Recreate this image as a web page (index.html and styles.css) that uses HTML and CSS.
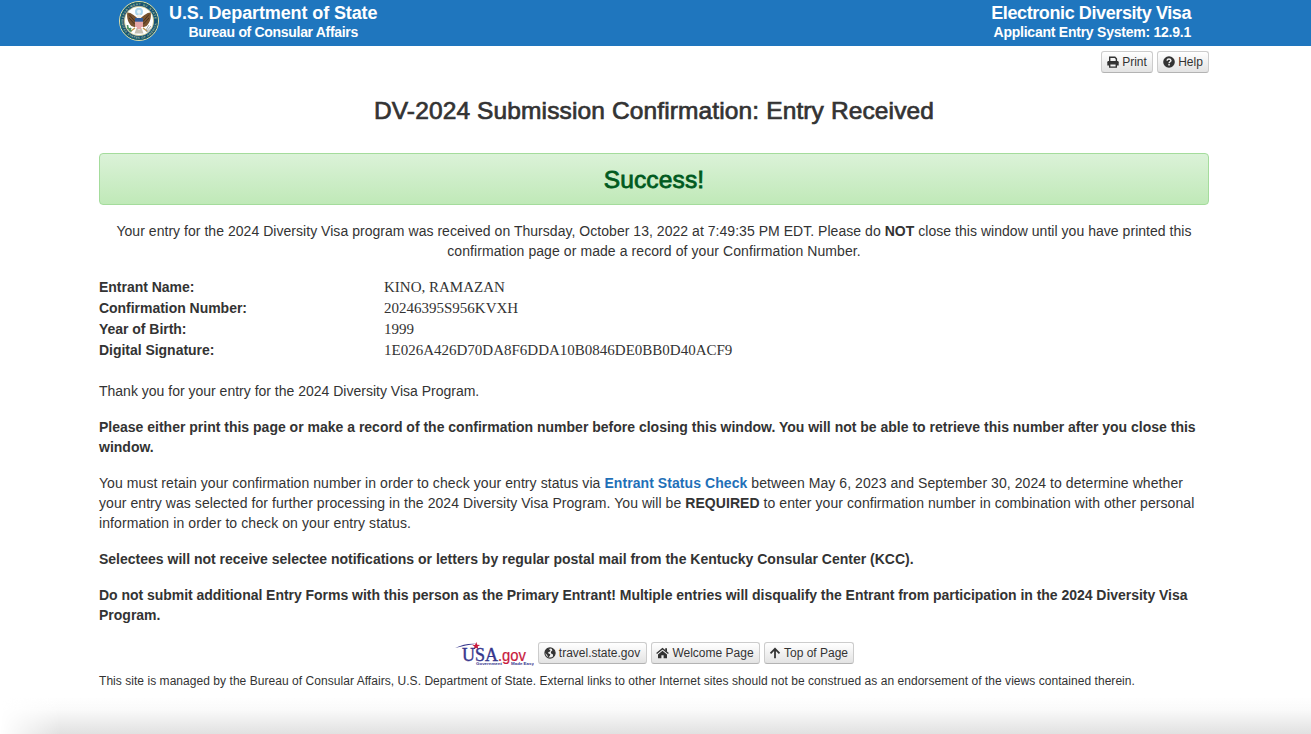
FILE: index.html
```html
<!DOCTYPE html>
<html lang="en">
<head>
<meta charset="utf-8">
<title>DV-2024 Submission Confirmation</title>
<link rel="stylesheet" href="styles.css">
</head>
<body>
<header class="banner">
  <div class="banner-inner">
    <div class="brand">
      <svg class="seal" viewBox="0 0 40 40">
        <defs>
          <path id="arc-top" d="M4.3 20a15.7 15.7 0 0 1 31.4 0"/>
          <path id="arc-bottom" d="M2.2 20a17.8 17.8 0 0 0 35.6 0"/>
        </defs>
        <circle cx="20" cy="20" r="19.5" fill="#174f73" stroke="#e3e1a8" stroke-width="1"/>
        <circle cx="20" cy="20" r="18.4" fill="none" stroke="#1c6b60" stroke-width=".7"/>
        <text class="seal-text"><textPath href="#arc-top" textLength="47">DEPARTMENT OF STATE</textPath></text>
        <text class="seal-text"><textPath href="#arc-bottom" textLength="53">UNITED STATES OF AMERICA</textPath></text>
        <circle cx="20" cy="20" r="14.7" fill="#fff" stroke="#c3bd72" stroke-width=".7"/>
        <circle cx="20" cy="10.8" r="4" fill="#a9d5ed"/>
        <circle cx="20" cy="10.8" r="2" fill="#e9f4f7"/>
        <path d="M18.500 17C15 15 12.500 11.500 8.300 11.600c-.8 5 .8 10.500 4.200 13.400l3.200 1.200 1.500-4zM21.500 17c3.500-2 6-5.500 10.200-5.400.8 5-.8 10.500-4.200 13.400l-3.200 1.200-1.500-4z" fill="#79532f"/>
        <path d="M10 13.500l6 7M10 17l5.500 6M30 13.500l-6 7M30 17l-5.500 6" stroke="#3c2a20" stroke-width=".8"/>
        <path d="M17.600 17.500l.4-3 2-1.200 2 1 .3 3.200z" fill="#f5f1e6"/>
        <path d="M17.500 27h5l2 5.500h-9z" fill="#c6c0b2"/>
        <path d="M16 27l-4 3M24 27l4 3" stroke="#c09549" stroke-width="1.500"/>
        <path d="M8.500 24c0 3 1.500 5 4 6.500M8 27l4 1M10 30l2-3" stroke="#4d9161" stroke-width="1.600" fill="none"/>
        <path d="M27 31l5-6M28 31l4-3M27 29l3-5" stroke="#9ba2a2" stroke-width=".9"/>
        <path d="M16 17h8v6.500c0 2.600-2 4.200-4 5.500-2-1.300-4-2.900-4-5.500z" fill="#f6e9e5"/>
        <path d="M17 20v6M19 20v8M21 20v8M23 20v6" stroke="#d0525a" stroke-width=".9"/>
        <path d="M16 17h8v3.700h-8z" fill="#315a98"/>
      </svg>
      <div class="titles">
        <div class="title dept">U.S. Department of State</div>
        <div class="subtitle bureau">Bureau of Consular Affairs</div>
      </div>
    </div>
    <div class="titles system">
      <div class="title edv">Electronic Diversity Visa</div>
      <div class="subtitle version">Applicant Entry System: 12.9.1</div>
    </div>
  </div>
</header>

<main class="container">
  <div class="toolbar">
    <a class="btn print"><svg class="icon" viewBox="0 0 12 12"><path d="M1.500 4.900h9q1.200 0 1.200 1.300v3.200H.3V6.200Q.3 4.900 1.500 4.900z" fill="#333"/><path d="M2.700 5.500V1.200h5.200l1.500 1.500v2.800" fill="none" stroke="#333" stroke-width="1.400"/><path d="M2.700 7.900h6.600v3.200H2.700z" fill="#f2f2f2" stroke="#333" stroke-width="1.400"/></svg><span>Print</span></a>
    <a class="btn help"><svg class="icon" viewBox="0 0 12 12"><circle cx="6" cy="6" r="5.800" fill="#333"/><path d="M4 4.600Q4.300 3 6 3t1.900 1.500C7.900 5.800 6.100 5.700 6.100 7.200" fill="none" stroke="#f4f4f4" stroke-width="1.500"/><path d="M5.300 8.100h1.500v1.500H5.300z" fill="#f4f4f4"/></svg><span>Help</span></a>
  </div>

  <h1 class="heading"><span>DV-2024 Submission Confirmation: Entry Received</span></h1>
  <div class="alert"><span>Success!</span></div>

  <p class="received"><span class="r1">Your entry for the 2024 Diversity Visa program was received on Thursday, October 13, 2022 at 7:49:35 PM EDT. Please do <b>NOT</b> close this window until you have printed this</span><br><span class="r2">confirmation page or made a record of your Confirmation Number.</span></p>

  <dl class="details">
    <dt>Entrant Name:</dt><dd>KINO, RAMAZAN</dd>
    <dt>Confirmation Number:</dt><dd>20246395S956KVXH</dd>
    <dt>Year of Birth:</dt><dd>1999</dd>
    <dt>Digital Signature:</dt><dd class="signature">1E026A426D70DA8F6DDA10B0846DE0BB0D40ACF9</dd>
  </dl>

  <p><span class="thanks">Thank you for your entry for the 2024 Diversity Visa Program.</span></p>
  <p class="strong"><span class="s1">Please either print this page or make a record of the confirmation number before closing this window. You will not be able to retrieve this number after you close this</span><br>window.</p>
  <p><span class="c1">You must retain your confirmation number in order to check your entry status via <a class="link">Entrant Status Check</a> between May 6, 2023 and September 30, 2024 to determine whether</span><br><span class="c2">your entry was selected for further processing in the 2024 Diversity Visa Program. You will be <b>REQUIRED</b> to enter your confirmation number in combination with other personal</span><br><span class="c3">information in order to check on your entry status.</span></p>
  <p class="strong"><span class="k1">Selectees will not receive selectee notifications or letters by regular postal mail from the Kentucky Consular Center (KCC).</span></p>
  <p class="strong"><span class="d1">Do not submit additional Entry Forms with this person as the Primary Entrant! Multiple entries will disqualify the Entrant from participation in the 2024 Diversity Visa</span><br>Program.</p>

  <footer>
    <div class="footer-links">
      <svg class="usagov" viewBox="0 0 79 24">
        <path d="M0 6Q10 1 21 1.800 11 3 0 6z" fill="#35358c"/>
        <path d="M17 2.700l3 .2L21.300 0l.9 2.700 2.900.2-2.400 1.700.7 2.800-2.300-1.700-2.400 1.800.8-2.900z" fill="#c8193c"/>
        <text x="7" y="18.500" class="usa" textLength="36" lengthAdjust="spacingAndGlyphs">USA</text>
        <text x="43" y="18.500" class="gov" textLength="28" lengthAdjust="spacingAndGlyphs">.gov</text>
        <text x="21" y="22.800" class="tagline" textLength="26" lengthAdjust="spacingAndGlyphs">Government</text>
        <text x="56" y="22.800" class="tagline" textLength="23" lengthAdjust="spacingAndGlyphs">Made Easy</text>
      </svg>
      <a class="btn travel"><svg class="icon" viewBox="0 0 12 12"><circle cx="6" cy="6" r="5.100" fill="#eee" stroke="#333" stroke-width="1.100"/><path d="M1 4l2-2.600L6.200 1 5 2.500l1.500.6-.8 1.700-1.600.5.4 1.200 1.800.7-.5 1.800-1.500 1.600-1.200-2.600L1 5.800zM7.500 1l2.600 1.700L11.300 6l-.7 2.200-1.300 1.700-.5-2.700-1.700-.7-.3-1.700 1.600-1.300z" fill="#333"/></svg><span>travel.state.gov</span></a>
      <a class="btn welcome"><svg class="icon wide" viewBox="0 0 13 12"><path d="M6.500 3.700L2 7.400v3.900h3.400V8.200h2.200v3.100H11V7.400z" fill="#333"/><path d="M.6 6.600L6.500 1.700l5.900 4.900" fill="none" stroke="#333" stroke-width="1.300"/><path d="M9.200 1.200H11v3.500L9.200 3.200z" fill="#333"/></svg><span>Welcome Page</span></a>
      <a class="btn top"><svg class="icon" viewBox="0 0 12 12"><path d="M6 11.300V2M1.500 6.300L6 1.800l4.500 4.500" fill="none" stroke="#333" stroke-width="1.800"/></svg><span>Top of Page</span></a>
    </div>
    <div class="notice"><span>This site is managed by the Bureau of Consular Affairs, U.S. Department of State. External links to other Internet sites should not be construed as an endorsement of the views contained therein.</span></div>
  </footer>
</main>
<div class="bottom-shadow"></div>
</body>
</html>
```
FILE: styles.css
```css
* { box-sizing: border-box; }
html { height: 734px; overflow: hidden; }
body {
  margin: 0;
  height: 734px;
  position: relative;
  overflow: hidden;
  background: #fff;
  color: #333;
  font: 14px/20px "Liberation Sans", Arial, sans-serif;
  white-space: nowrap;
}
.banner { height: 46px; background: #1f76be; color: #fff; }
.banner-inner { width: 1072px; margin-left: 119px; display: flex; justify-content: space-between; }
.brand { display: flex; gap: 10px; }
.seal { width: 40px; height: 40px; margin-top: 1px; }
.seal-text { font: bold 2.800px "Liberation Sans", sans-serif; fill: #b5c9a0; }
.titles { padding-top: 3px; text-align: center; font-weight: bold; }
.system { text-align: right; }
.title { font-size: 18px; line-height: 20px; }
.subtitle { font-size: 14px; line-height: 18px; }
.dept { letter-spacing: -.11px; }
.bureau { letter-spacing: -.31px; }
.edv { letter-spacing: -.4px; }
.version { letter-spacing: -.24px; }
.container { width: 1110px; margin-left: 99px; }
.toolbar { display: flex; justify-content: flex-end; gap: 4px; padding-top: 5px; }
.btn {
  display: inline-flex;
  align-items: center;
  justify-content: center;
  gap: 3px;
  height: 22px;
  border: 1px solid #ccc;
  border-bottom-color: #b3b3b3;
  border-radius: 3px;
  background: linear-gradient(#fff, #e3e3e3);
  font-size: 12px;
  line-height: 18px;
}
.icon { width: 12px; height: 12px; flex: none; }
.wide { width: 13px; }
.print, .help { width: 52px; }
.travel { width: 109px; }
.welcome { width: 109px; }
.top { width: 90px; }
.heading {
  margin: 17px 0 22px;
  font-size: 24.500px;
  line-height: 41px;
  font-weight: normal;
  letter-spacing: .125px;
  text-align: center;
  -webkit-text-stroke: .7px #333;
}
.alert {
  height: 52px;
  margin-bottom: 16px;
  border: 1px solid #a4dc9c;
  border-radius: 4px;
  background: linear-gradient(#dbf2d8, #c0e9b8);
  color: #005a1e;
  font-size: 24.500px;
  line-height: 52px;
  letter-spacing: .15px;
  text-align: center;
  -webkit-text-stroke: .8px #005a1e;
}
p { margin: 0 0 16px; }
.received { text-align: center; }
.r1 { letter-spacing: .038px; }
.r2 { letter-spacing: .08px; }
.c1 { letter-spacing: .069px; }
.c2 { letter-spacing: .063px; }
.c3 { letter-spacing: .09px; }
.d1 { letter-spacing: -.035px; }
.details {
  display: grid;
  grid-template-columns: 285px auto;
  grid-auto-rows: 21px;
  margin: 0 0 20px;
  line-height: 20px;
}
dt, .strong { font-weight: bold; }
dt { letter-spacing: -.03px; }
dd { margin: 0; font-family: "Liberation Serif", "Times New Roman", serif; font-size: 15px; }
.link { color: #1f70b8; font-weight: bold; }
.footer-links { display: flex; justify-content: center; gap: 4px; padding-top: 1px; }
.usagov { width: 79px; height: 24px; }
.usa { font: 19px "Liberation Serif", serif; fill: #35358c; stroke: #35358c; stroke-width: .4px; }
.gov { font: 16px "Liberation Sans", sans-serif; fill: #c8193c; stroke: #c8193c; stroke-width: .2px; }
.tagline { font: bold 4.200px "Liberation Sans", sans-serif; fill: #35358c; }
.notice { font-size: 12px; line-height: 20px; margin-top: 5px; letter-spacing: .046px; }
.bottom-shadow {
  position: absolute;
  inset: 690px 0 0;
  background: linear-gradient(#fff0 15%, #fafafa 45%, #e1e1e1 100%);
  -webkit-mask-image: linear-gradient(to right, transparent, #000 60px);
  mask-image: linear-gradient(to right, transparent, #000 60px);
}
```
